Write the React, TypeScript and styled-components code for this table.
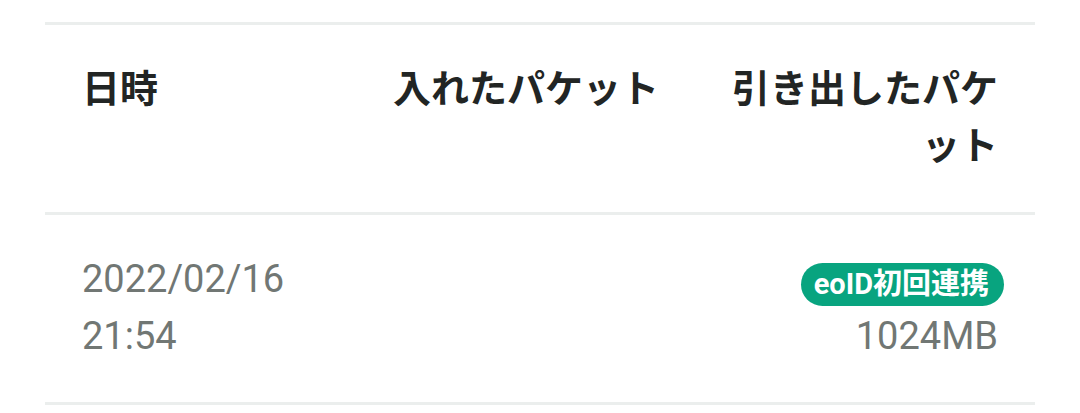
import React from "react";
import styled, { createGlobalStyle } from "styled-components";

const GlobalStyle = createGlobalStyle`
  body {
    margin: 0;
    background: #ffffff;
    font-family: Roboto, "Noto Sans CJK JP", sans-serif;
  }
`;

const Table = styled.div`
  width: 990px;
  margin: 22px 0 0 45px;
  border-top: 3px solid #ebeeed;
`;

const Row = styled.div`
  display: grid;
  grid-template-columns: repeat(3, 1fr);
  column-gap: 17px;
  padding: 36px 37px 37px;
  border-bottom: 3px solid #ebeeed;
  line-height: 57px;
  font-size: 38px;
`;

const HeadCell = styled.div<{ $align?: "left" | "right" }>`
  font-weight: 700;
  color: #222524;
  text-align: ${(p) => p.$align || "left"};
`;

const Cell = styled.div<{ $align?: "left" | "right" }>`
  display: flex;
  flex-direction: column;
  align-items: ${(p) => (p.$align === "right" ? "flex-end" : "flex-start")};
  color: #717774;
`;

const BadgeLine = styled.div`
  height: 57px;
  display: flex;
  align-items: flex-end;
  padding-bottom: 2px;
  box-sizing: border-box;
  margin-right: -6px;
`;

const Badge = styled.span`
  display: inline-flex;
  align-items: center;
  height: 43px;
  padding: 0 15px 0 13px;
  border-radius: 22px;
  background: #08a47f;
  color: #ffffff;
  font-size: 29px;
  font-weight: 700;
  line-height: 1;
`;

const history = [
  { date: "2022/02/16", time: "21:54", deposit: "", badge: "eoID初回連携", withdraw: "1024MB" },
];

const App = () => {
  return (
    <>
      <GlobalStyle />
      <Table>
        <Row>
          <HeadCell>日時</HeadCell>
          <HeadCell>入れたパケット</HeadCell>
          <HeadCell $align="right">引き出したパケット</HeadCell>
        </Row>

        {history.map((h) => (
          <Row key={h.date + h.time}>
            <Cell>
              <span>{h.date}</span>
              <span>{h.time}</span>
            </Cell>
            <Cell>{h.deposit}</Cell>
            <Cell $align="right">
              <BadgeLine>
                <Badge>{h.badge}</Badge>
              </BadgeLine>
              <span>{h.withdraw}</span>
            </Cell>
          </Row>
        ))}
      </Table>
    </>
  );
};

export default App;
